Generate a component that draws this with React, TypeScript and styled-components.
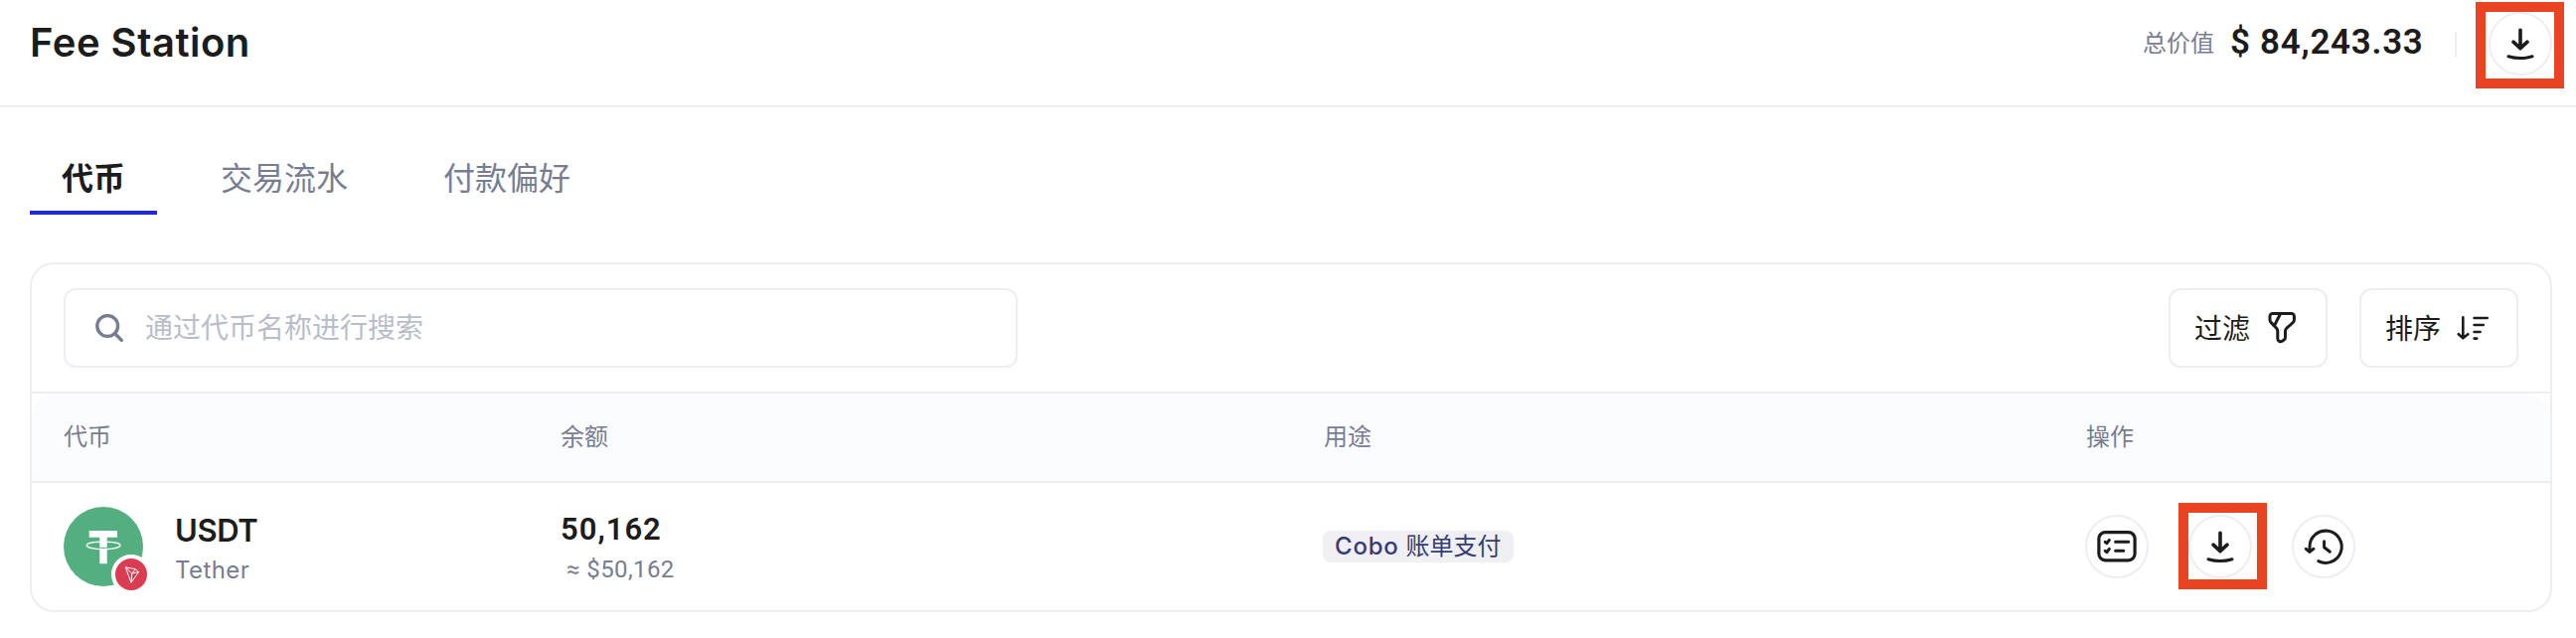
import React from "react";
import styled, { createGlobalStyle } from "styled-components";

const c = {
  ink: "#1c1c1c",
  muted: "#787d92",
  faint: "#b9bdc9",
  line: "#ededf3",
  blue: "#1f2bd3",
  mark: "#ea4322",
};

const Global = createGlobalStyle`
  *, *::before, *::after { box-sizing: border-box; }
  body {
    margin: 0;
    background: #fff;
    color: ${c.ink};
    font-family: Inter, "Noto Sans CJK SC", sans-serif;
  }
  button, input { font: inherit; color: inherit; background: none; border: 0; padding: 0; margin: 0; }
`;

const Page = styled.div`
  width: 2592px;
  height: 642px;
  overflow: hidden;
`;

const Header = styled.header`
  height: 108px;
  padding: 0 24px 18px 30px;
  border-bottom: 2px solid ${c.line};
  display: flex;
  align-items: center;
  justify-content: space-between;
`;

const Title = styled.h1`
  margin: 0;
  padding-bottom: 2px;
  font-size: 40px;
  line-height: 60px;
  font-weight: 600;
  letter-spacing: 0.5px;
`;

const Summary = styled.div`
  display: flex;
  align-items: center;
`;

const SummaryLabel = styled.span`
  font-size: 24px;
  line-height: 36px;
  color: ${c.muted};
`;

const Total = styled.span`
  width: 194px;
  margin-left: 16px;
  padding-bottom: 2px;
  font-family: Roboto, sans-serif;
  font-size: 35px;
  line-height: 40px;
  font-weight: 600;
  letter-spacing: 0.7px;
  white-space: nowrap;
`;

const Divider = styled.i`
  width: 2px;
  height: 25px;
  margin: 0 32px;
  background: ${c.line};
`;

const RoundButton = styled.button`
  position: relative;
  width: 64px;
  height: 64px;
  border: 2px solid ${c.line};
  border-radius: 50%;
  display: grid;
  place-items: center;
  flex: none;
`;

const Highlight = styled.span<{ $left: number; $top: number }>`
  position: absolute;
  left: ${(p) => p.$left}px;
  top: ${(p) => p.$top}px;
  width: 89px;
  height: 87px;
  border: 10px solid ${c.mark};
  pointer-events: none;
`;

const Tabs = styled.nav`
  display: flex;
  gap: 32px;
  padding: 36px 30px 0;
  height: 156px;
`;

const Tab = styled.button<{ $active?: boolean }>`
  height: 72px;
  padding: 4px 32px 0;
  font-size: 32px;
  line-height: 64px;
  font-weight: ${(p) => (p.$active ? 700 : 400)};
  color: ${(p) => (p.$active ? c.ink : c.muted)};
  border-bottom: 4px solid ${(p) => (p.$active ? c.blue : "transparent")};
`;

const Card = styled.section`
  width: 2538px;
  height: 352px;
  margin-left: 30px;
  border: 2px solid ${c.line};
  border-radius: 24px;
`;

const Toolbar = styled.div`
  height: 130px;
  padding: 24px 32px;
  border-bottom: 2px solid ${c.line};
  display: flex;
  gap: 32px;
`;

const Search = styled.label`
  width: 960px;
  height: 80px;
  margin-right: auto;
  padding: 0 30px;
  border: 2px solid ${c.line};
  border-radius: 12px;
  display: flex;
  align-items: center;
  gap: 22px;
`;

const SearchInput = styled.input`
  flex: 1;
  height: 60px;
  outline: none;
  font-size: 28px;
  &::placeholder { color: ${c.faint}; opacity: 1; }
`;

const ToolButton = styled.button`
  width: 160px;
  height: 80px;
  padding-left: 24px;
  border: 2px solid ${c.line};
  border-radius: 12px;
  display: flex;
  align-items: center;
  gap: 16px;
  font-size: 28px;
`;

const ToolLabel = styled.span`
  padding-bottom: 3px;
`;

const Row = styled.div`
  display: grid;
  grid-template-columns: 500px 767px 767px 1fr;
  align-items: center;
  padding: 0 32px;
  height: 128px;
`;

const HeadRow = styled(Row)`
  height: 90px;
  grid-template-columns: 500px 768px 767px 1fr;
  padding-bottom: 6px;
  background: #fbfcfe;
  border-bottom: 2px solid ${c.line};
  border-radius: 24px 24px 0 0;
  color: ${c.muted};
  font-size: 24px;
`;

const Token = styled.div`
  display: flex;
  gap: 32px;
`;

const Logo = styled.div`
  position: relative;
  width: 80px;
  height: 80px;
  svg { display: block; }
`;

const ChainBadge = styled.span`
  position: absolute;
  left: 48px;
  top: 48px;
  width: 40px;
  height: 40px;
  border: 4px solid #fff;
  border-radius: 50%;
  background: #dc3c52;
`;

const Stack = styled.div`
  display: flex;
  flex-direction: column;
`;

const Symbol = styled.span`
  font-size: 31px;
  line-height: 48px;
  font-weight: 600;
  letter-spacing: -0.4px;
`;

const Name = styled.span`
  font-size: 24px;
  line-height: 32px;
  letter-spacing: 0.4px;
  color: ${c.muted};
`;

const Amount = styled.span`
  padding-top: 2px;
  font-family: Roboto, sans-serif;
  font-size: 31px;
  line-height: 44px;
  font-weight: 600;
  letter-spacing: 1px;
`;

const Approx = styled.span`
  padding-left: 6px;
  font-family: Roboto, sans-serif;
  font-size: 24px;
  line-height: 36px;
  letter-spacing: 0.4px;
  color: ${c.muted};
`;

const Tag = styled.span`
  display: block;
  width: 192px;
  height: 32px;
  padding-left: 12px;
  border-radius: 8px;
  background: #f0eff4;
  color: #363c76;
  font-size: 24px;
  line-height: 32px;
  white-space: nowrap;
`;

const Brand = styled.b`
  font-weight: 500;
  letter-spacing: 0.8px;
`;

const Actions = styled.div`
  display: flex;
  gap: 40px;
`;

const Drawing = styled.svg`
  display: block;
  flex: none;
`;

type IconProps = { size: number; box?: string; stroke?: number; color?: string; children: React.ReactNode };
const Icon = ({ size, box, stroke = 3.4, color = c.ink, children }: IconProps) => (
  <Drawing
    width={size}
    height={size}
    viewBox={box ?? `0 0 ${size} ${size}`}
    fill="none"
    stroke={color}
    strokeWidth={stroke}
    strokeLinecap="round"
    strokeLinejoin="round"
  >
    {children}
  </Drawing>
);

const DownloadIcon = () => (
  <Icon size={60} box="2 2 60 60" stroke={3.6}>
    <path d="M32 18.3V36.5M25 30.2l7 6.4 7-6.4" />
    <path d="M20 44.8Q32 48.4 44 44.8" strokeWidth={3} />
  </Icon>
);

const ListIcon = () => (
  <Icon size={60} box="2 2 60 60" stroke={3}>
    <rect x="13.9" y="17.6" width="36.2" height="28.2" rx="6.5" strokeWidth={3.2} />
    <path d="M20.2 27.4l1.8 1.3 2.4-3.3M30.6 27.3h13.2M20.2 36.4l1.8 1.3 2.4-3.3M30.6 36.2h8.2" />
  </Icon>
);

const HistoryIcon = () => (
  <Icon size={60} box="2 2 60 60" stroke={3}>
    <path d="M18 37V32.2A16.1 16.1 0 1 1 26.8 46.6" />
    <path d="M14.3 34.3l3.6 3 4-3" />
    <path d="M32.6 26.8V32.8L38.4 37.2" />
  </Icon>
);

const FilterIcon = () => (
  <Icon size={32} box="0.6 1.04 22.5 22.5" stroke={2.1}>
    <path d="M5.4 2.1h13.2c1.1 0 2 .9 2 2v2.2c0 .8-.5 1.8-1 2.3l-4.3 3.8c-.6.5-1 1.5-1 2.3V19c0 .6-.4 1.4-.9 1.7l-1.4.9c-1.3.8-3.1-.1-3.1-1.7v-5.3c0-.7-.4-1.6-.8-2.1l-3.8-4c-.5-.5-.9-1.4-.9-2V4.2c0-1.2.9-2.1 2-2.1z" />
    <path d="M10.8 2.3 6.6 10.6" />
  </Icon>
);

const SortIcon = () => (
  <Icon size={32} stroke={2.6}>
    <path d="M6.3 5.4V26M1.8 22.2l4.5 4.1 5-4.1M17.6 6h13.2M17.6 13h9.2M17.6 20h6M17.6 26.6h2.6" />
  </Icon>
);

const SearchIcon = () => (
  <Icon size={28} stroke={3.4} color={c.muted}>
    <circle cx="12.2" cy="12" r="10.4" />
    <path d="M20 20l6.2 6.2" />
  </Icon>
);

const TetherLogo = () => (
  <Drawing width="80" height="80" viewBox="0 0 80 80">
    <circle cx="40" cy="40" r="40" fill="#53ae80" />
    <path d="M25.7 24H54v6.8H43.7v26.5h-7.4V30.8H25.7z" fill="#fff" />
    <path d="M36 41.2Q40 41.6 44 41.2" fill="none" stroke="#53ae80" strokeWidth="1" />
    <path
      d="M36.3 35.3C28.5 35.6 23.2 37 23.2 38.8C23.2 41 30.5 42.7 40 42.7S57 41 57 38.8C57 37 51.5 35.6 43.7 35.3"
      fill="none"
      stroke="#fff"
      strokeWidth="1.4"
    />
  </Drawing>
);

const TronMark = () => (
  <Drawing width="32" height="32" viewBox="0 0 32 32" fill="none" stroke="#fff" strokeWidth="1" strokeLinejoin="round">
    <path d="M10.3 8.8 20.4 10.7 23.6 13.6 15.9 24.2zM10.3 8.8 16.8 15 23.6 13.6M16.8 15 20.4 10.7M16.8 15 15.9 24.2" />
  </Drawing>
);

export default function App() {
  return (
    <Page>
      <Global />
      <Header>
        <Title>Fee Station</Title>
        <Summary>
          <SummaryLabel>总价值</SummaryLabel>
          <Total>$ 84,243.33</Total>
          <Divider />
          <RoundButton aria-label="充值">
            <DownloadIcon />
            <Highlight $left={-15} $top={-12} />
          </RoundButton>
        </Summary>
      </Header>
      <Tabs>
        <Tab $active>代币</Tab>
        <Tab>交易流水</Tab>
        <Tab>付款偏好</Tab>
      </Tabs>
      <Card>
        <Toolbar>
          <Search>
            <SearchIcon />
            <SearchInput placeholder="通过代币名称进行搜索" />
          </Search>
          <ToolButton>
            <ToolLabel>过滤</ToolLabel>
            <FilterIcon />
          </ToolButton>
          <ToolButton>
            <ToolLabel>排序</ToolLabel>
            <SortIcon />
          </ToolButton>
        </Toolbar>
        <HeadRow>
          <span>代币</span>
          <span>余额</span>
          <span>用途</span>
          <span>操作</span>
        </HeadRow>
        <Row>
          <Token>
            <Logo>
              <TetherLogo />
              <ChainBadge>
                <TronMark />
              </ChainBadge>
            </Logo>
            <Stack>
              <Symbol>USDT</Symbol>
              <Name>Tether</Name>
            </Stack>
          </Token>
          <Stack>
            <Amount>50,162</Amount>
            <Approx>≈ $50,162</Approx>
          </Stack>
          <Tag>
            <Brand>Cobo</Brand> 账单支付
          </Tag>
          <Actions>
            <RoundButton aria-label="明细">
              <ListIcon />
            </RoundButton>
            <RoundButton aria-label="充值">
              <DownloadIcon />
              <Highlight $left={-12} $top={-14} />
            </RoundButton>
            <RoundButton aria-label="历史">
              <HistoryIcon />
            </RoundButton>
          </Actions>
        </Row>
      </Card>
    </Page>
  );
}
